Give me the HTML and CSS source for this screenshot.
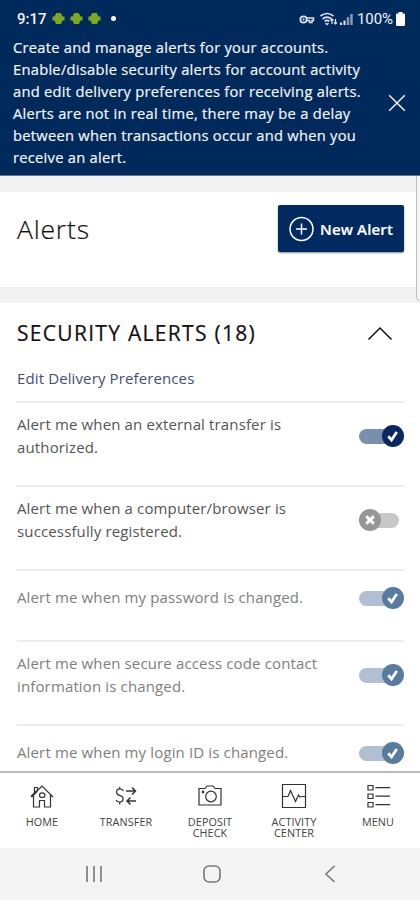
FILE: index.html
```
<!DOCTYPE html>
<html lang="en">
<head>
<meta charset="utf-8">
<title>Alerts</title>
<link rel="stylesheet" href="styles.css">
</head>
<body>
<svg class="defs" aria-hidden="true">
  <symbol id="droid" viewBox="0 0 13 13"><path d="M.5 4.500h2L4.300 1h4.400l1.800 3.500h2v4h-2L9 12H4L2.500 8.500h-2z" fill="#7fa91c"/></symbol>
  <symbol id="check" viewBox="0 0 22 22"><path d="M6.300 11.300l3.200 3.600 5.300-8" fill="none" stroke="#fff" stroke-width="2.800"/></symbol>
  <symbol id="cross" viewBox="0 0 22 22"><path d="M7.200 7.200l7.600 7.600m0-7.600l-7.600 7.600" fill="none" stroke="#fff" stroke-width="3"/></symbol>
</svg>
<div class="phone">
  <header class="banner">
    <div class="status">
      <span class="clock">9:17</span>
      <span class="droids"><svg><use href="#droid"/></svg><svg><use href="#droid"/></svg><svg><use href="#droid"/></svg></span>
      <span class="dot"></span>
      <svg class="signals" width="57" height="16" viewBox="0 0 57 16" fill="none" stroke="#dfe4ec">
        <circle cx="4.500" cy="8.500" r="3.200" stroke-width="1.700"/><circle cx="4.500" cy="8.500" r=".7"/><path d="M8 7h6.500v2.500h-1.500v2h-2.500v-2H8" stroke-width="1.500"/>
        <path d="M21.500 5q6.500-5 13 0M23.500 7.800q4.500-3.500 9 0M25.700 10.300q2.300-1.800 4.600 0" stroke-width="1.700"/><path d="M26.500 12l1.500 1.700 1.500-1.700M33 8v5m-1.500-3.500L33 8l1.500 1.500M36.500 8v5m-1.500-1.500l1.500 1.500 1.500-1.500" stroke-width="1.200"/>
        <path d="M42 14v-2.500M45.500 14V9.500" stroke-width="2"/><path d="M49 14V6M52.500 14V3" stroke="#8c9cb5" stroke-width="2.400"/>
      </svg>
      <span class="percent">100%</span>
      <svg class="battery" width="9" height="14" viewBox="0 0 9 14"><path d="M2.500 1.500V0h4v1.500H8q1 0 1 1V13q0 1-1 1H1q-1 0-1-1V2.500q0-1 1-1z" fill="#fff"/></svg>
    </div>
    <div class="notice">
      <p>Create and manage alerts for your accounts.<br>Enable/disable security alerts for account activity<br>and edit delivery preferences for receiving alerts.<br>Alerts are not in real time, there may be a delay<br>between when transactions occur and when you<br>receive an alert.</p>
      <svg width="18" height="18" viewBox="0 0 18 18"><path d="M1.200 1.200l15.600 15.600M16.800 1.200L1.200 16.800" fill="none" stroke="#eef1f6" stroke-width="1.500"/></svg>
    </div>
  </header>
  <main class="content">
    <section class="title-card">
      <h1>Alerts</h1>
      <button class="new-alert"><svg width="26" height="26" viewBox="0 0 26 26" fill="none" stroke="#fff" stroke-width="1.500"><circle cx="13.500" cy="13" r="11.500"/><path d="M13.500 7.500v11M8 13h11"/></svg><span>New Alert</span></button>
    </section>
    <section class="security">
      <div class="section-head"><h2>SECURITY ALERTS (18)</h2><svg width="26" height="15" viewBox="0 0 26 15"><path d="M1.500 13.500L13 2l11.500 11.500" fill="none" stroke="#111" stroke-width="1.500"/></svg></div>
      <a class="edit">Edit Delivery Preferences</a>
      <ul class="alerts">
        <li class="double"><span>Alert me when an external transfer is<br>authorized.</span><i class="toggle on"><svg><use href="#check"/></svg></i></li>
        <li class="double"><span>Alert me when a computer/browser is<br>successfully registered.</span><i class="toggle off"><svg><use href="#cross"/></svg></i></li>
        <li class="single locked"><span>Alert me when my password is changed.</span><i class="toggle on"><svg><use href="#check"/></svg></i></li>
        <li class="double locked"><span>Alert me when secure access code contact<br>information is changed.</span><i class="toggle on"><svg><use href="#check"/></svg></i></li>
        <li class="single locked"><span>Alert me when my login ID is changed.</span><i class="toggle on"><svg><use href="#check"/></svg></i></li>
      </ul>
    </section>
    <div class="scrollbar"></div>
  </main>
  <nav class="tabs">
    <a><svg viewBox="0 0 26 26"><path d="M2 14L13 3l11 11M4.500 11.500V24h6v-6.500h5V24h6V11.500M5.500 10V4.500h3v2.500"/><path d="M2.500 13.500L8 8" stroke-width="2"/><ellipse cx="13.200" cy="12.200" rx="2.700" ry="2.300"/></svg><span>HOME</span></a>
    <a><svg viewBox="0 0 26 26"><path d="M10.500 8Q9.500 5.800 7 5.800C2.500 5.800 2.500 11.300 6.500 12.300c5 1.200 4.500 6.700-.2 6.700Q4 19 3 17M6.700 3.800v2M6.700 19v2.500"/><path d="M13 8h9.500M19 4.500L22.500 8 19 11.500M23 18h-9M17.500 14.500L14 18l3.500 3.500" stroke-width="1.500"/></svg><span>TRANSFER</span></a>
    <a><svg viewBox="0 0 26 26"><path d="M2 22V5.500h6L10 3h6l2 2.500h6V22z"/><circle cx="14" cy="13.500" r="5.300"/><circle cx="6" cy="9" r=".8" fill="#333"/></svg><span>DEPOSIT</span><span>CHECK</span></a>
    <a><svg viewBox="0 0 26 26"><path d="M1.500 1.500h23v23h-23zM1.500 13.500H7l2.500-6 5 11 3-6.500 1.500 2 1.500-.5h4"/></svg><span>ACTIVITY</span><span>CENTER</span></a>
    <a><svg viewBox="0 0 26 26"><path d="M3 2.500h5V7H3zM3 11h5v4.500H3zM3 19.500h5V24H3zM10.500 4.700H25M10.500 13.200H25M10.500 21.700H25"/></svg><span>MENU</span></a>
  </nav>
  <footer class="system">
    <svg viewBox="0 0 18 18"><path d="M2 1v16M9 1v16M16 1v16"/></svg>
    <svg viewBox="0 0 18 18"><rect x="1" y="1" width="16" height="16" rx="5"/></svg>
    <svg viewBox="0 0 18 18"><path d="M13.500 1L5 9l8.500 8"/></svg>
  </footer>
</div>
</body>
</html>
```
FILE: styles.css
```
* { box-sizing: border-box; margin: 0; padding: 0; }
body { width: 420px; height: 900px; overflow: hidden; font-family: "Open Sans", sans-serif; background: #fff; }
.defs { position: absolute; width: 0; height: 0; }
.phone { display: flex; flex-direction: column; height: 900px; }
.banner { height: 176px; background: #002a5c; color: #f3f5f8; border-bottom: 1px solid #66728f; }
.status { display: flex; align-items: center; height: 37px; padding: 0 15px 0 17px; }
.clock { width: 35px; font: 500 15px/20px Roboto, sans-serif; letter-spacing: 0; }
.droids { display: flex; gap: 5px; }
.droids svg { width: 13px; height: 13px; }
.dot { width: 5px; height: 5px; margin-left: 10px; border-radius: 50%; background: #fff; }
.signals { margin-left: auto; }
.percent { width: 39px; margin-left: 1px; font: 15px/20px Roboto, sans-serif; letter-spacing: -.1px; }
.notice { display: flex; justify-content: space-between; padding: 0 14px 0 13px; }
.notice p { width: 360px; font-size: 14.700px; letter-spacing: .27px; line-height: 21.900px; white-space: nowrap; -webkit-text-stroke: .2px; }
.notice svg { flex: none; margin-top: 57px; }
.content { position: relative; height: 595px; background: #f2f2f2; padding-top: 16px; overflow: hidden; }
.title-card { display: flex; justify-content: space-between; height: 95px; padding: 13px 16px 0 17px; background: #fff; }
h1 { font-size: 26.500px; font-weight: 300; line-height: 48px; color: #111; letter-spacing: .8px; -webkit-text-stroke: .2px; }
.new-alert { display: flex; align-items: center; width: 126px; height: 47px; padding-left: 10px; gap: 6px; border: 0; border-radius: 2px; background: #002a60; color: #fff; box-shadow: 0 1px 2px #888; font: 600 15px "Open Sans", sans-serif; letter-spacing: .15px; white-space: nowrap; -webkit-text-stroke: .2px; }
.security { margin-top: 16px; height: 480px; background: #fff; padding: 0 16px 0 17px; }
.section-head { display: flex; align-items: center; justify-content: space-between; height: 60px; padding-right: 11px; }
h2 { font-size: 21px; font-weight: 500; letter-spacing: 1.300px; color: #111; -webkit-text-stroke: .2px; }
.edit { display: block; height: 38px; line-height: 30px; font-size: 15px; color: #454e76; letter-spacing: .12px; }
.alerts { list-style: none; }
.alerts li { display: flex; align-items: center; justify-content: space-between; border-top: 2px solid #ededed; font-size: 15px; letter-spacing: .14px; line-height: 23px; color: #555; white-space: nowrap; }
.alerts .double { height: 84px; padding-bottom: 16px; }
.alerts .single { height: 71px; padding-bottom: 16px; }
.alerts .locked { color: #808080; }
.toggle { position: relative; width: 45px; height: 22px; }
.toggle::before { content: ""; display: block; width: 38px; height: 15px; margin-top: 4px; border-radius: 8px; background: #7890ad; }
.toggle svg { position: absolute; top: 0; right: 0; width: 22px; height: 22px; border-radius: 50%; background: #092863; }
.toggle.off svg { left: 0; background: #969696; }
.toggle.off::before { background: #c8c8c8; width: 40px; }
.locked .toggle::before { background: #b0c0d2; }
.locked .toggle svg { background: #587b9f; }
.scrollbar { position: absolute; top: -8px; right: -4px; width: 8px; height: 133px; border: 1px solid #bcbcbc; border-radius: 4px; background: #f6f6f6; }
.tabs { display: grid; grid-template-columns: repeat(5, 84px); height: 77px; border-top: 2px solid #bcbcbc; background: #fff; }
.tabs a { display: flex; flex-direction: column; align-items: center; padding-top: 10px; text-align: center; font-size: 10.800px; letter-spacing: .1px; line-height: 11px; color: #444; }
.tabs svg { width: 26px; height: 26px; margin-bottom: 7px; fill: none; stroke: #333; stroke-width: 1.200; }
.system { display: flex; justify-content: center; gap: 100px; align-items: center; height: 52px; padding-left: 3px; background: #f4f4f4; }
.system svg { width: 18px; height: 18px; fill: none; stroke: #777; stroke-width: 1.600; }
```
